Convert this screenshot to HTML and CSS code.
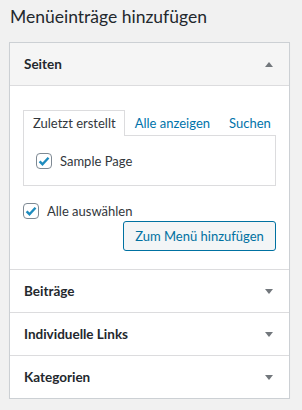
FILE: index.html
```html
<!DOCTYPE html>
<html lang="de">
<head>
    <meta charset="UTF-8">
    <title>Menüeinträge hinzufügen</title>
    <link rel="stylesheet" href="styles.css">
</head>
<body>
    <h2 class="title">Menüeinträge hinzufügen</h2>

    <div class="accordion">
        <div class="section open">
            <div class="section-head">
                <span>Seiten</span>
                <span class="arrow up"></span>
            </div>
            <div class="section-body">
                <div class="tabs">
                    <span class="tab active">Zuletzt erstellt</span>
                    <span class="tab">Alle anzeigen</span>
                    <span class="tab">Suchen</span>
                </div>
                <div class="tab-panel">
                    <label class="check">
                        <span class="box"><svg viewBox="0 0 16 16" width="16" height="16"><path d="M3.6 8.3l2.9 2.9 6-6.4" fill="none" stroke="#1e8cbe" stroke-width="2.4"/></svg></span>
                        Sample Page
                    </label>
                </div>
                <label class="check select-all">
                    <span class="box"><svg viewBox="0 0 16 16" width="16" height="16"><path d="M3.6 8.3l2.9 2.9 6-6.4" fill="none" stroke="#1e8cbe" stroke-width="2.4"/></svg></span>
                    Alle auswählen
                </label>
                <div class="actions">
                    <button class="button">Zum Menü hinzufügen</button>
                </div>
            </div>
        </div>
        <div class="section">
            <div class="section-head"><span>Beiträge</span><span class="arrow"></span></div>
        </div>
        <div class="section">
            <div class="section-head"><span>Individuelle Links</span><span class="arrow"></span></div>
        </div>
        <div class="section">
            <div class="section-head"><span>Kategorien</span><span class="arrow"></span></div>
        </div>
    </div>
</body>
</html>
```

FILE: styles.css
```css
body {
    font-family: Lato, "Open Sans", sans-serif;
    background-color: #f1f1f1;
    margin: 0;
    padding: 0 12px 0 9px;
    color: #444;
    font-size: 13px;
}
.title {
    margin: 0;
    padding: 5px 0 0 1px;
    height: 42px;
    box-sizing: border-box;
    font-size: 17.5px;
    font-weight: 400;
    line-height: 24px;
    color: #23282d;
}
.accordion {
    border: 1px solid #ccd0d4;
    background-color: white;
    box-shadow: 0 1px 1px rgba(0, 0, 0, 0.04);
}
.section + .section {
    border-top: 1px solid #dcdcde;
}
.section-head {
    display: flex;
    align-items: center;
    justify-content: space-between;
    height: 42px;
    padding: 0 16px 0 14px;
    font-size: 13.5px;
    font-weight: 700;
    color: #23282d;
}
.section.open .section-head {
    background-color: #f5f5f5;
    border-bottom: 1px solid #dcdcde;
}
.arrow {
    width: 0;
    height: 0;
    border-left: 4px solid transparent;
    border-right: 4px solid transparent;
    border-top: 5px solid #72777c;
}
.arrow.up {
    border-top: none;
    border-bottom: 5px solid #72777c;
}
.section-body {
    padding: 24px 13px 18px;
}
.tabs {
    display: flex;
    height: 25px;
    white-space: nowrap;
    position: relative;
    z-index: 1;
}
.tab {
    padding: 0 8px 0 9px;
    line-height: 25px;
    color: #0073aa;
    border: 1px solid transparent;
    border-bottom: none;
}
.tab.active {
    color: #32373c;
    border-color: #dcdcde;
    background-color: white;
    height: 25px;
}
.tab-panel {
    border: 1px solid #dcdcde;
    height: 51px;
    box-sizing: border-box;
    padding: 17px 12px 0;
}
.check {
    display: flex;
    align-items: center;
    gap: 8px;
    height: 16px;
    color: #32373c;
}
.box {
    width: 14px;
    height: 14px;
    border: 1px solid #7e8993;
    border-radius: 4px;
    display: flex;
    align-items: center;
    justify-content: center;
    background-color: white;
}
.box svg {
    flex: none;
}
.select-all {
    margin-top: 17px;
}
.actions {
    display: flex;
    justify-content: flex-end;
    margin-top: 2px;
}
.button {
    font-family: inherit;
    font-size: 13px;
    width: 153px;
    height: 30px;
    padding: 0;
    color: #0071a1;
    border: 1px solid #0071a1;
    border-radius: 3px;
    background-color: #f3f5f6;
    cursor: pointer;
}
```
